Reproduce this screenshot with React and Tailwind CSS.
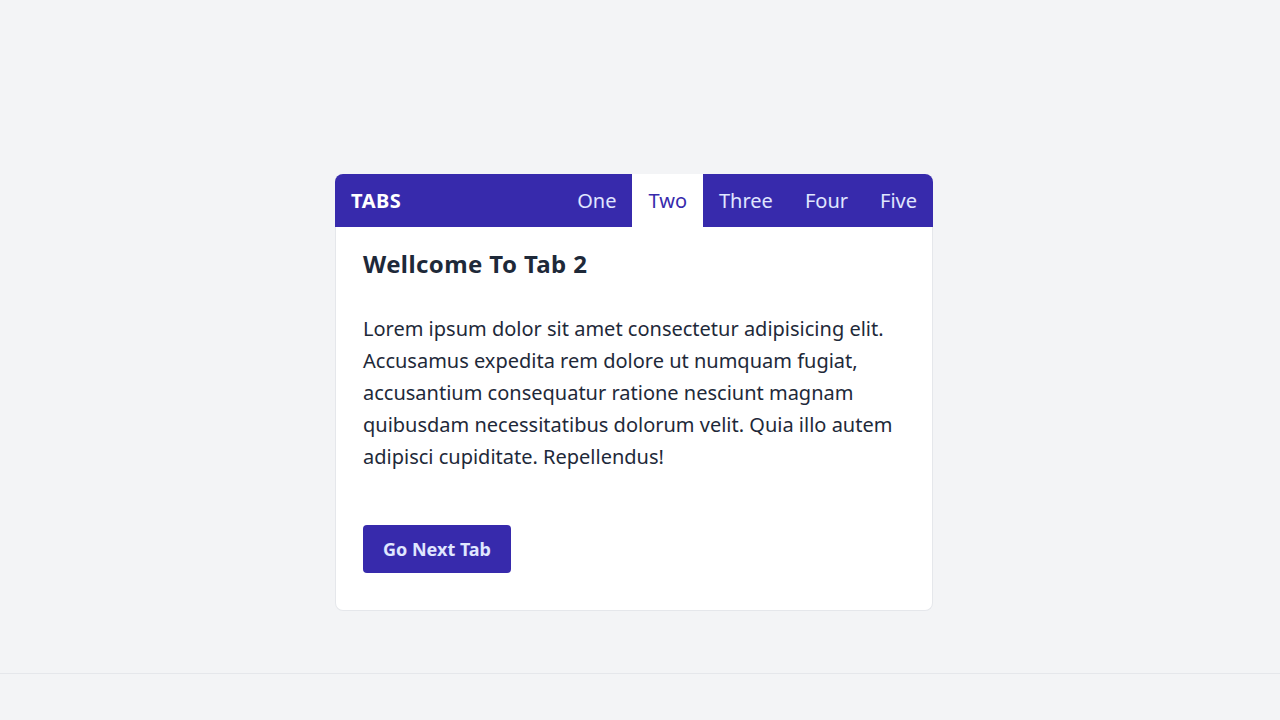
import React, { useState } from "react";

const tabs = ["One", "Two", "Three", "Four", "Five"];

const App = () => {
  const [active, setActive] = useState(1);

  return (
    <div className="min-h-screen bg-gray-100 flex flex-col text-gray-800 font-['Noto_Sans',sans-serif]">
      <main className="h-[673px] pt-[174px] pr-3">
        <div className="mx-auto w-[598px]">
          {/* Header */}
          <div className="flex items-center justify-between bg-indigo-800 rounded-t-lg h-[53px] pl-4">
            <span className="text-xl font-bold text-white tracking-[0.5px]">TABS</span>
            <div className="flex h-full">
              {tabs.map((tab, i) => (
                <button
                  key={tab}
                  onClick={() => setActive(i)}
                  className={`px-4 h-full text-xl ${
                    i === active
                      ? "bg-white text-indigo-800"
                      : "text-indigo-100"
                  } ${i === tabs.length - 1 ? "rounded-tr-lg" : ""}`}
                >
                  {tab}
                </button>
              ))}
            </div>
          </div>

          {/* Content */}
          <div className="bg-white border border-t-0 border-gray-200 rounded-b-lg px-[27px] pt-[21px] pb-[37px]">
            <h2 className="text-2xl font-bold leading-8 mb-[33px] tracking-[0.4px]">
              Wellcome To Tab {active + 1}
            </h2>
            <p className="text-xl leading-8 text-gray-800">
              Lorem ipsum dolor sit amet consectetur adipisicing elit.
              Accusamus expedita rem dolore ut numquam fugiat, accusantium
              consequatur ratione nesciunt magnam quibusdam necessitatibus
              dolorum velit. Quia illo autem adipisci cupiditate. Repellendus!
            </p>
            <button
              onClick={() => setActive((active + 1) % tabs.length)}
              className="mt-[52px] h-12 px-5 rounded bg-indigo-800 text-indigo-100 text-lg font-bold"
            >
              Go Next Tab
            </button>
          </div>
        </div>
      </main>
      <footer className="flex-1 border-t border-gray-200"></footer>
    </div>
  );
};

export default App;
